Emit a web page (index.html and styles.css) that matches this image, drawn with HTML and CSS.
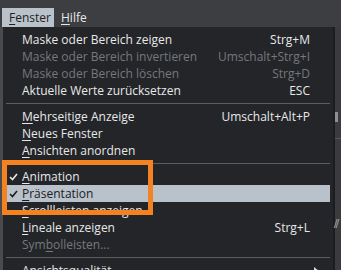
FILE: index.html
```html
<!DOCTYPE html>
<html lang="de">
<head>
<meta charset="utf-8">
<title>Fenster-Menü</title>
<link rel="stylesheet" href="styles.css">
</head>
<body>
<div class="menubar">
  <span class="mb-item active"><u>F</u>enster</span>
  <span class="mb-item"><u>H</u>ilfe</span>
</div>
<div class="frame">
  <div class="leftstrip"></div>
  <div class="menu">
    <div class="item"><span class="label">Maske oder Bereich zeigen</span><span class="key">Strg+M</span></div>
    <div class="item disabled"><span class="label">Maske oder Bereich invertieren</span><span class="key">Umschalt+Strg+I</span></div>
    <div class="item disabled"><span class="label">Maske oder Bereich löschen</span><span class="key">Strg+D</span></div>
    <div class="item"><span class="label">Aktuelle Werte zurücksetzen</span><span class="key">ESC</span></div>
    <div class="sep"></div>
    <div class="item"><span class="label"><u>M</u>ehrseitige Anzeige</span><span class="key">Umschalt+Alt+P</span></div>
    <div class="item"><span class="label"><u>N</u>eues Fenster</span></div>
    <div class="item"><span class="label"><u>A</u>nsichten anordnen</span></div>
    <div class="sep"></div>
    <div class="item"><span class="check"><svg width="9" height="8" viewBox="0 0 9 8"><polyline points="1,4 3.5,6.5 8,1" fill="none" stroke="currentColor" stroke-width="1.6"/></svg></span><span class="label"><u>A</u>nimation</span></div>
    <div class="item hl"><span class="check"><svg width="9" height="8" viewBox="0 0 9 8"><polyline points="1,4 3.5,6.5 8,1" fill="none" stroke="currentColor" stroke-width="1.6"/></svg></span><span class="label"><u>P</u>räsentation</span></div>
    <div class="item"><span class="label"><u>S</u>crollleisten anzeigen</span></div>
    <div class="item"><span class="label"><u>L</u>ineale anzeigen</span><span class="key">Strg+L</span></div>
    <div class="item disabled"><span class="label">Sym<u>b</u>olleisten...</span></div>
    <div class="sep"></div>
    <div class="item"><span class="label">Ansichtsqualität</span><span class="arrow"></span></div>
    <div class="callout"></div>
  </div>
  <div class="side">
    <div class="side-edge"></div>
    <div class="side-panel">
      <div class="thumb"></div>
      <div class="side-line"></div>
      <div class="side-icon">⫽</div>
    </div>
  </div>
</div>
</body>
</html>
```

FILE: styles.css
```css
html, body {
  margin: 0;
  padding: 0;
}
body {
  width: 341px;
  height: 270px;
  overflow: hidden;
  background: #2a2b2e;
  font-family: "Open Sans", "Noto Sans", sans-serif;
  font-size: 12px;
  color: #e8e8e8;
}
u {
  text-decoration: underline;
  text-underline-offset: 2px;
  text-decoration-thickness: 1px;
}
.menubar {
  height: 27px;
  box-sizing: border-box;
  padding: 8px 0 0 2px;
  background: #3d3e42;
  display: flex;
  gap: 0;
}
.mb-item {
  height: 19px;
  line-height: 19px;
  padding: 0 7px;
  color: #e8e8e8;
}
.mb-item.active {
  width: 52px;
  box-sizing: border-box;
  background: #b9c2ca;
  color: #1e1f22;
}
.frame {
  display: flex;
  height: 243px;
}
.leftstrip {
  width: 3px;
  background: #4a4b4f;
}
.menu {
  position: relative;
  width: 330px;
  background: #232529;
  padding: 4px 0 0 0;
  box-sizing: border-box;
  display: flex;
  flex-direction: column;
}
.item {
  position: relative;
  height: 17px;
  line-height: 17px;
  margin: 0 3px;
  padding: 0 20px 0 16px;
  display: flex;
  justify-content: space-between;
  align-items: center;
  flex-shrink: 0;
  white-space: nowrap;
}
.item.disabled {
  color: #76787c;
}
.item.hl {
  background: #b9c2ca;
  color: #1b1c1f;
}
.check {
  position: absolute;
  left: 3px;
  top: 5px;
  line-height: 0;
}
.key {
  text-align: right;
}
.sep {
  height: 9px;
  margin: 0 3px;
  flex-shrink: 0;
  display: flex;
  align-items: center;
}
.sep::before {
  content: "";
  display: block;
  width: 100%;
  height: 1px;
  background: #5b5d61;
}
.arrow {
  width: 0;
  height: 0;
  border-left: 5px solid #d8d8d8;
  border-top: 4px solid transparent;
  border-bottom: 4px solid transparent;
  margin-right: -9px;
}
.callout {
  position: absolute;
  left: -1px;
  top: 133px;
  width: 141px;
  height: 45px;
  border: 5px solid #f58220;
}
.side {
  flex: 1;
  display: flex;
}
.side-edge {
  width: 2px;
  background: #1c1d20;
}
.side-panel {
  position: relative;
  flex: 1;
  background: #3a3b3f;
}
.thumb {
  position: absolute;
  left: 0;
  top: 85px;
  width: 3px;
  height: 10px;
  background: #8e9095;
}
.side-line {
  position: absolute;
  left: 0;
  right: 0;
  top: 111px;
  height: 1px;
  background: #55575b;
}
.side-icon {
  position: absolute;
  left: -1px;
  top: 188px;
  font-size: 12px;
  color: #c8c8c8;
}
```
